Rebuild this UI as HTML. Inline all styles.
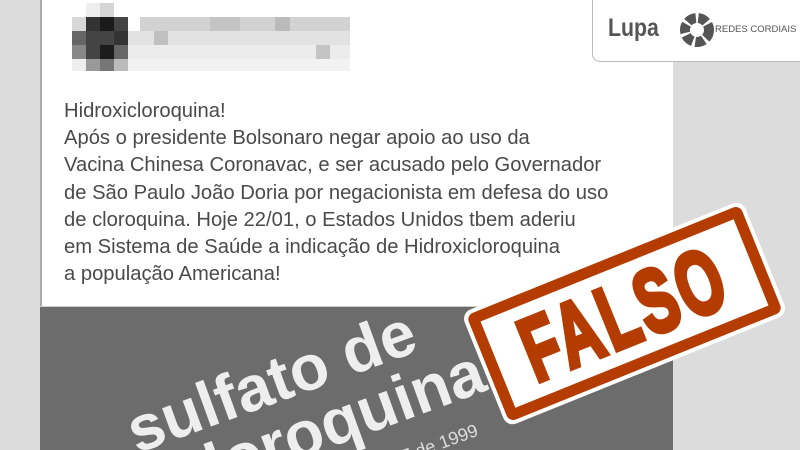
<!DOCTYPE html>
<html><head><meta charset="utf-8"><style>
html,body{margin:0;padding:0;overflow:hidden}
body{width:800px;height:450px;overflow:hidden;background:#dcdcdc;position:relative;font-family:"Liberation Sans","DejaVu Sans",sans-serif}
.card{position:absolute;left:40px;top:0;width:633px;height:450px;background:#fff;border-left:2px solid #aaa;box-sizing:border-box}
.txt{position:absolute;left:64px;top:98px;font-size:20.2px;line-height:27.2px;color:#4a4a4a;white-space:pre}
.img{position:absolute;left:40px;top:306px;width:633px;height:144px;background:#6c6c6c;overflow:hidden;border-top:1px solid #ccc;box-sizing:border-box}
.logo{position:absolute;left:592px;top:0;width:208px;height:62px;background:#fff;border:1px solid #bbb;border-top:none;border-right:none;border-bottom-left-radius:8px;box-sizing:border-box;overflow:hidden}
.stamp{position:absolute;left:473px;top:252px;width:303px;height:123px;transform:rotate(-22deg);background:#fff;border-radius:10px;box-sizing:border-box;padding:4px}
.stamp .in{width:100%;height:100%;border:11px solid #b43c00;border-radius:7px;box-sizing:border-box;display:flex;align-items:center;justify-content:center;overflow:hidden}
.stamp span{font-family:"Liberation Sans",sans-serif;font-weight:bold;font-size:86px;color:#b43c00;-webkit-text-stroke:5px #b43c00;transform:scaleX(0.68) scaleY(1.05);display:block;letter-spacing:6px;line-height:1}
</style></head><body>
<div class="card"></div>
<div class="logo">
<div style="position:absolute;left:15px;top:14px;font-size:25px;font-weight:bold;color:#555;transform:scaleX(.85);transform-origin:left">Lupa</div>
<svg style="position:absolute;left:86px;top:10px" width="40" height="40" viewBox="0 0 40 40">
<circle cx="18" cy="20" r="12" fill="none" stroke="#555" stroke-width="10" stroke-dasharray="9 2.5"/>
</svg>
<div style="position:absolute;left:121px;top:24px;font-size:9.5px;color:#555;white-space:nowrap;background:#fff;padding-left:1px">REDES CORDIAIS</div>
</div>
<svg style="position:absolute;left:70px;top:0" width="280" height="72">
<g>
<rect x="16" y="3" width="14" height="14" fill="#eee"/><rect x="30" y="3" width="14" height="14" fill="#d5d5d5"/>
<rect x="2" y="17" width="14" height="14" fill="#d8d8d8"/><rect x="16" y="17" width="14" height="14" fill="#333"/><rect x="30" y="17" width="14" height="14" fill="#1a1a1a"/><rect x="44" y="17" width="14" height="14" fill="#444"/>
<rect x="2" y="31" width="14" height="14" fill="#666"/><rect x="16" y="31" width="14" height="14" fill="#444"/><rect x="30" y="31" width="14" height="14" fill="#444"/><rect x="44" y="31" width="14" height="14" fill="#333"/>
<rect x="2" y="45" width="14" height="14" fill="#888"/><rect x="16" y="45" width="14" height="14" fill="#444"/><rect x="30" y="45" width="14" height="14" fill="#1c1c1c"/><rect x="44" y="45" width="14" height="14" fill="#666"/>
<rect x="2" y="59" width="14" height="12" fill="#eee"/><rect x="16" y="59" width="14" height="12" fill="#999"/><rect x="30" y="59" width="14" height="12" fill="#777"/><rect x="44" y="59" width="14" height="12" fill="#bbb"/>
<rect x="70" y="17" width="270" height="14" fill="#d2d2d2"/>
<rect x="58" y="31" width="282" height="14" fill="#e2e2e2"/>
<rect x="58" y="45" width="240" height="14" fill="#ececec"/>
<rect x="58" y="59" width="240" height="12" fill="#f2f2f2"/>
<rect x="140" y="17" width="30" height="14" fill="#c4c4c4"/><rect x="205" y="17" width="15" height="14" fill="#bbb"/>
<rect x="84" y="31" width="14" height="14" fill="#c0c0c0"/><rect x="246" y="45" width="14" height="14" fill="#c4c4c4"/>
</g></svg>
<div class="txt">Hidroxicloroquina!
Após o presidente Bolsonaro negar apoio ao uso da
Vacina Chinesa Coronavac, e ser acusado pelo Governador
de São Paulo João Doria por negacionista em defesa do uso
de cloroquina. Hoje 22/01, o Estados Unidos tbem aderiu
em Sistema de Saúde a indicação de Hidroxicloroquina
a população Americana!</div>
<div class="img">
<div style="position:absolute;left:100px;top:92px;font-size:64px;font-weight:bold;color:#eee;transform:rotate(-20deg);transform-origin:left bottom;white-space:nowrap;line-height:1">sulfato de</div>
<div style="position:absolute;left:95px;top:158px;font-size:64px;font-weight:bold;color:#eee;transform:rotate(-20deg);transform-origin:left bottom;white-space:nowrap;line-height:1">xicloroquina</div>
<div style="position:absolute;left:350px;top:128px;font-size:18px;color:#ddd;transform:rotate(-20deg);white-space:nowrap">27 de 1999</div>
</div>
<div class="stamp"><div class="in"><span>FALSO</span></div></div>
</body></html>
